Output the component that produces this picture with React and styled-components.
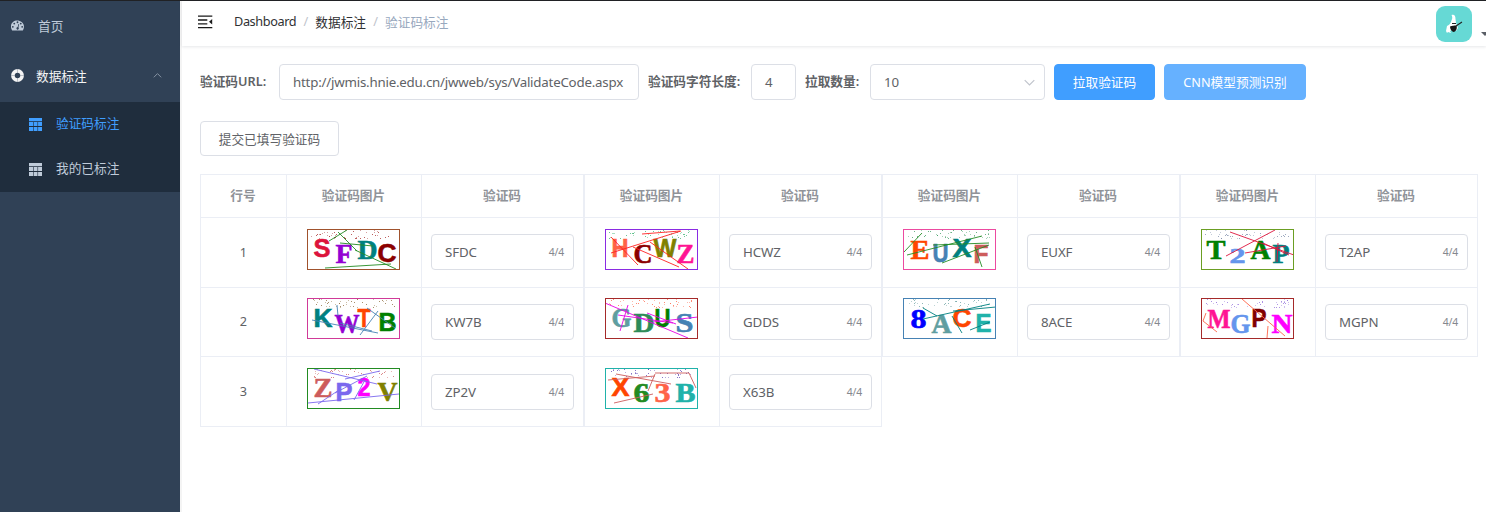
import React from 'react';
import styled, { createGlobalStyle } from 'styled-components';

const GlobalStyle = createGlobalStyle`
  * { box-sizing: border-box; }
  body {
    margin: 0;
    background: #fff;
    color: #606266;
    font-family: "Noto Sans", "Noto Sans CJK SC", sans-serif;
    font-size: 12.7px;
    overflow: hidden;
  }
  button, input { font: inherit; }
`;

const Page = styled.div`
  display: flex;
  height: 512px;
  border-top: 1px solid #202124;
  overflow: hidden;
`;

const Sidebar = styled.nav`
  flex: none;
  width: 180px;
  background: #304156;
`;

const MenuItem = styled.a`
  display: flex;
  align-items: center;
  height: ${(p) => p.$height}px;
  padding: 0 18px 2px 11px;
  gap: ${(p) => p.$gap}px;
  color: ${(p) => p.$color || '#bfcbd9'};
  svg { flex: none; }
`;

const SubMenu = styled.div`
  background: #1f2d3d;
`;

const SubItem = styled.a`
  display: flex;
  align-items: center;
  gap: 14px;
  height: 45px;
  padding: 0 0 4px 29px;
  color: ${(p) => (p.$active ? '#409eff' : '#bfcbd9')};
  svg { margin-top: 3px; }
`;

const Fill = styled.span`
  flex: 1;
`;

const Main = styled.main`
  flex: 1;
  min-width: 0;
  border-left: 2px solid #f4f4f4;
`;

const Header = styled.header`
  display: flex;
  align-items: center;
  height: 45px;
  padding: 0 0 3px 16px;
  box-shadow: 0 1px 3px rgba(0, 21, 41, 0.1);
`;

const Breadcrumb = styled.div`
  display: flex;
  flex: 1;
  align-items: center;
  margin-left: 21px;
  padding-bottom: 2px;
  color: #303133;
`;

const Crumb = styled.span`
  letter-spacing: ${(p) => p.$spacing || 0}px;
`;

const Separator = styled.span`
  width: 19px;
  text-align: center;
  color: #c0c4cc;
`;

const Current = styled.span`
  color: #97a8be;
`;

const Account = styled.div`
  display: flex;
  align-items: flex-end;
  flex: none;
  width: 50px;
  height: 36px;
  gap: 9px;
  margin-top: 4px;
  overflow: hidden;
`;

const Avatar = styled.div`
  flex: none;
  width: 36px;
  height: 36px;
  border-radius: 9px;
  background: #66d9d5;
  overflow: hidden;
`;

const Caret = styled.i`
  flex: none;
  border: 4.5px solid transparent;
  border-top-color: #5a5e66;
  margin-bottom: 2px;
`;

const Content = styled.section`
  padding: 18px 0 0 18px;
`;

const Toolbar = styled.div`
  display: flex;
  align-items: center;
  height: 36px;
`;

const Label = styled.label`
  flex: none;
  width: ${(p) => p.$width}px;
  padding-bottom: 3px;
  font-weight: 600;
  white-space: nowrap;
`;

const Field = styled.div`
  display: flex;
  align-items: center;
  justify-content: space-between;
  flex: none;
  width: ${(p) => p.$width}px;
  height: 36px;
  padding: 0 9px 0 13px;
  margin-right: ${(p) => p.$after || 0}px;
  border: 1px solid #dcdfe6;
  border-radius: 4px;
  white-space: nowrap;
  font-size: 13.3px;
  letter-spacing: ${(p) => p.$spacing || 0}px;
`;

const Counter = styled.span`
  font-size: 10.4px;
  letter-spacing: -0.2px;
  color: #85888e;
`;

const Button = styled.button`
  flex: none;
  width: ${(p) => p.$width}px;
  height: ${(p) => p.$height || 36}px;
  padding: 0 0 1px;
  margin-right: 9px;
  border: 1px solid ${(p) => p.$bg || '#dcdfe6'};
  border-radius: 4px;
  background: ${(p) => p.$bg || '#fff'};
  color: ${(p) => (p.$bg ? '#fff' : '#606266')};
  white-space: nowrap;
`;

const Actions = styled.div`
  display: flex;
  padding: 21px 0 18px;
`;

const Tables = styled.div`
  display: flex;
  align-items: flex-start;
`;

const Table = styled.div`
  display: grid;
  grid-template-columns: ${(p) => (p.$numbered ? '86px ' : '')}135px 162px;
  grid-template-rows: 43px 70px 69px;
  grid-auto-rows: 70px;
  border: solid #ebeef5;
  border-width: 1px 0 0 1px;
`;

const HeadCell = styled.div`
  display: flex;
  align-items: center;
  justify-content: center;
  padding: 0 1px 4px 0;
  border: solid #ebeef5;
  border-width: 0 1px 1px 0;
  color: #909399;
  font-weight: 600;
`;

const Cell = styled.div`
  display: flex;
  align-items: center;
  justify-content: center;
  padding-top: ${(p) => p.$top || 0}px;
  padding-right: ${(p) => p.$right || 0}px;
  padding-bottom: ${(p) => p.$bottom || 0}px;
  border: solid #ebeef5;
  border-width: 0 1px 1px 0;
`;

const Picture = styled.svg`
  display: block;
  width: 93px;
  height: 41px;
`;

/* glyph: [char, left, right, baseline, serif, colour, cap height] */
const CODES = {
  SFDC: {
    border: '#a0522d', line: '#228b22', dot: '#a52a2a',
    glyphs: [['S', 7, 23, 28, 0, '#dc143c'], ['F', 29, 45, 34, 1, '#9400d3'], ['D', 51, 70, 30, 1, '#008080'], ['C', 71, 89, 33, 0, '#8b0000']],
    lines: [[22, 12, 40, 1], [31, 3, 50, 22], [33, 14, 66, 17], [48, 21, 89, 40], [18, 39, 84, 35]],
  },
  KW7B: {
    border: '#d03a98', line: '#4682b4', dot: '#8b6b3a',
    glyphs: [['K', 7, 25, 29, 0, '#008080'], ['W', 28, 52, 35, 1, '#9400d3'], ['T', 51, 63, 29, 0, '#ff4500'], ['B', 72, 89, 33, 0, '#008000']],
    lines: [[5, 22, 71, 35], [30, 7, 31, 18], [71, 13, 53, 37], [60, 10, 88, 30], [33, 25, 65, 33]],
  },
  ZP2V: {
    border: '#228b22', line: '#7b68ee', dot: '#cd5c5c',
    glyphs: [['Z', 7, 25, 29, 1, '#cd5c5c'], ['P', 29, 45, 33, 0, '#7b68ee'], ['2', 51, 63, 28, 0, '#ff00ff'], ['V', 71, 90, 33, 1, '#808000']],
    lines: [[7, 1, 70, 16], [38, 11, 73, 3], [60, 8, 28, 25], [58, 12, 47, 32], [1, 35, 92, 26], [11, 36, 32, 22]],
  },
  HCWZ: {
    border: '#8a2be2', line: '#ff2020', dot: '#3cb371',
    glyphs: [['H', 7, 23, 28, 0, '#ff6347'], ['C', 29, 47, 34, 1, '#8b0000'], ['W', 49, 71, 28, 0, '#808000'], ['Z', 72, 89, 34, 1, '#ff1493']],
    lines: [[6, 24, 76, 2], [37, 5, 75, 2], [6, 8, 33, 36], [28, 18, 74, 38], [45, 13, 83, 40]],
  },
  GDDS: {
    border: '#a52a2a', line: '#e600e6', dot: '#ff6347',
    glyphs: [['G', 7, 26, 29, 1, '#5f9ea0'], ['D', 29, 49, 34, 1, '#2e8b57'], ['U', 50, 65, 29, 0, '#008000'], ['S', 71, 88, 34, 1, '#4682b4']],
    lines: [[0, 5, 83, 40], [13, 17, 68, 25], [23, 7, 15, 33], [48, 24, 93, 19], [42, 15, 71, 26]],
  },
  X63B: {
    border: '#20b2aa', line: '#cd5c5c', dot: '#5f45b5',
    glyphs: [['X', 7, 24, 28, 0, '#ff4500'], ['6', 29, 44, 34, 1, '#228b22'], ['3', 50, 65, 34, 1, '#ff6347'], ['B', 71, 90, 34, 1, '#20b2aa']],
    lines: [[11, 6, 66, 16], [3, 12, 50, 8], [50, 5, 84, 5], [84, 5, 91, 20], [50, 6, 43, 23], [9, 35, 48, 26]],
  },
  EUXF: {
    border: '#ec4aa0', line: '#228b22', dot: '#3c9b60',
    glyphs: [['E', 8, 26, 30, 1, '#ff4500'], ['U', 30, 45, 33, 0, '#4682b4'], ['X', 50, 68, 28, 0, '#008080'], ['F', 71, 85, 34, 0, '#cd5c5c']],
    lines: [[4, 26, 79, 7], [30, 16, 86, 14], [39, 34, 86, 16], [19, 4, 1, 23], [72, 18, 79, 38]],
  },
  '8ACE': {
    border: '#4682b4', line: '#008080', dot: '#6aa0a0',
    glyphs: [['8', 8, 23, 30, 1, '#0000ff'], ['A', 29, 48, 35, 1, '#5f9ea0'], ['C', 50, 68, 29, 0, '#ff4500'], ['E', 73, 88, 34, 0, '#20b2aa']],
    lines: [[20, 21, 87, 6], [20, 10, 34, 18], [50, 13, 93, 9], [49, 18, 59, 35], [67, 32, 87, 24]],
  },
  T2AP: {
    border: '#6b9e23', line: '#dc143c', dot: '#7b8ba8',
    glyphs: [['T', 6, 24, 30, 1, '#008000'], ['2', 29, 44, 34, 1, '#6495ed', 14], ['A', 50, 69, 30, 1, '#008000'], ['P', 72, 88, 34, 1, '#008080']],
    lines: [[29, 3, 93, 26], [74, 1, 25, 27], [44, 24, 85, 17], [62, 14, 88, 26], [77, 14, 76, 33]],
  },
  MGPN: {
    border: '#a52a2a', line: '#ff6347', dot: '#9370db',
    glyphs: [['M', 7, 29, 30, 1, '#ff1493'], ['G', 30, 49, 35, 1, '#6495ed'], ['P', 51, 65, 29, 0, '#800000'], ['N', 71, 91, 35, 1, '#ff00ff']],
    lines: [[41, 1, 84, 38], [5, 15, 2, 23], [2, 23, 16, 34], [67, 28, 66, 40]],
  },
};

function Captcha({ code }) {
  const { border, line, dot, glyphs, lines } = CODES[code];
  const seed = code.charCodeAt(0) * 7 + code.charCodeAt(1);
  const dots = Array.from({ length: 46 }, (_, i) => {
    const a = Math.abs(Math.sin((i + 1) * 12.9898 + seed) * 43758.5453) % 1;
    const b = Math.abs(Math.sin((i + 1) * 78.233 + seed) * 12543.123) % 1;
    return [Math.floor(4 + a * 84), Math.floor(1 + b * 9)];
  });
  return (
    <Picture viewBox="0 0 93 41">
      {dots.map(([x, y], i) => (
        <rect key={i} x={x} y={y} width="1" height="1" fill={dot} opacity={i % 2 ? 0.75 : 0.45} />
      ))}
      {glyphs.map(([ch, x1, x2, y, serif, fill, cap = 18]) => (
        <text
          key={ch + x1}
          x={x1 - 0.5}
          y={y}
          fill={fill}
          stroke={fill}
          strokeWidth="0.6"
          fontSize={serif ? cap / 0.655 : cap / 0.688}
          fontWeight="700"
          fontFamily={serif ? '"Liberation Serif", serif' : '"Liberation Sans", sans-serif'}
          textLength={x2 - x1 + 1}
          lengthAdjust="spacingAndGlyphs"
        >
          {ch}
        </text>
      ))}
      {lines.map(([a, b, c, d], i) => (
        <line key={i} x1={a} y1={b} x2={c} y2={d} stroke={line} strokeWidth="0.9" />
      ))}
      <rect x="0.5" y="0.5" width="92" height="40" fill="none" stroke={border} />
    </Picture>
  );
}

const GridIcon = () => (
  <svg width="13" height="13" viewBox="0 0 13 13" fill="currentColor">
    <path d="M0 0h13v3.2H0zM0 4h4.2v4H0zM4.8 4h3.7v4H4.8zM9.1 4H13v4H9.1zM0 9h4.2v4H0zM4.8 9h3.7v4H4.8zM9.1 9H13v4H9.1z" />
  </svg>
);

const DashboardIcon = () => (
  <svg width="13" height="11" viewBox="0 0 128 100">
    <path
      fill="currentColor"
      fillRule="evenodd"
      d="M27 63a9 9 0 1 0-18 0 9 9 0 0 0 18 0zm14-32a9 9 0 1 0-18 0 9 9 0 0 0 18 0zm32 35 7-27c1-4-5-6-7-2l-7 27c-13 1-18 17-7 25 12 7 25-9 14-23zm46-3a9 9 0 1 0-18 0 9 9 0 0 0 18 0zM73 18a9 9 0 1 0-18 0 9 9 0 0 0 18 0zm32 13a9 9 0 1 0-18 0 9 9 0 0 0 18 0zm23 32c0 13-4 24-10 34-1 2-2 3-4 3H14c-2 0-3-1-4-3C-29 27 49-27 108 19c13 11 20 27 20 44z"
    />
  </svg>
);

const ComponentIcon = () => (
  <svg width="13" height="13" viewBox="0 0 13 13" fill="none">
    <circle cx="6.5" cy="6.5" r="4.6" stroke="currentColor" strokeWidth="3.7" />
    <path d="M6.5 0v3.8M6.5 9.2V13M0 6.5h3.8M9.2 6.5H13" stroke="#304156" strokeWidth="0.7" opacity="0.4" />
  </svg>
);

const FoldIcon = () => (
  <svg width="15" height="14" viewBox="0 0 15 14">
    <path d="M0 1.1h14.3M0 5h9.3M0 8.8h9.3M0 12.7h14.3" stroke="#1a1a1a" strokeWidth="1.3" />
    <path d="M14.2 4v5.6L11 6.8z" fill="#1a1a1a" />
  </svg>
);

const Chevron = ({ up, size = 11, color }) => (
  <svg width={size} height="7" viewBox="0 0 11 7" fill="none" stroke={color} strokeWidth="1.2">
    <path d={up ? 'M1 5.7 5.5 1.2 10 5.7' : 'M.7 1.2 5.5 6 10.3 1.2'} />
  </svg>
);

const AvatarArt = () => (
  <svg width="36" height="36" viewBox="0 0 36 36">
    <path d="M15.5 9c3-1 4 1 4 4l.5 4 2 5-2 3-4-1-2 1 1 2-3-1-1 1-1-2 1-5c2-1 3-2 4-4 1-3 2-4 .5-7z" fill="#fff" />
    <path d="M14 20.500c2-1 4-1 6.500-1 1 3-.5 6-3 6.500-2-.5-3.500-3-3.500-5.500z" fill="#171717" />
    <path d="M16 17.500h4M20 20l6-4" stroke="#222" strokeWidth="1.100" />
  </svg>
);

const GROUPS = [
  ['SFDC', 'KW7B', 'ZP2V'],
  ['HCWZ', 'GDDS', 'X63B'],
  ['EUXF', '8ACE'],
  ['T2AP', 'MGPN'],
];

function CodeTable({ codes, numbered }) {
  return (
    <Table $numbered={numbered}>
      {numbered && <HeadCell>行号</HeadCell>}
      <HeadCell>验证码图片</HeadCell>
      <HeadCell>验证码</HeadCell>
      {codes.map((code, i) => (
        <React.Fragment key={code}>
          {numbered && <Cell $bottom={2}>{i + 1}</Cell>}
          <Cell $bottom={i === 1 ? 7 : 6} $right={1}><Captcha code={code} /></Cell>
          <Cell $bottom={1} $top={i === 2 ? 1 : 0}>
            <Field $width={143} $spacing={-0.1}>
              {code}
              <Counter>4/4</Counter>
            </Field>
          </Cell>
        </React.Fragment>
      ))}
    </Table>
  );
}

export default function App() {
  return (
    <>
      <GlobalStyle />
      <Page>
        <Sidebar>
          <MenuItem $height={50} $gap={14}>
            <DashboardIcon />首页
          </MenuItem>
          <MenuItem $height={51} $gap={12} $color="#f4f4f5">
            <ComponentIcon />数据标注
            <Fill />
            <Chevron up size={9} color="#8793a3" />
          </MenuItem>
          <SubMenu>
            <SubItem $active><GridIcon />验证码标注</SubItem>
            <SubItem><GridIcon />我的已标注</SubItem>
          </SubMenu>
        </Sidebar>
        <Main>
          <Header>
            <FoldIcon />
            <Breadcrumb>
              <Crumb $spacing={-0.38}>Dashboard</Crumb><Separator>/</Separator>
              <Crumb>数据标注</Crumb><Separator>/</Separator>
              <Current>验证码标注</Current>
            </Breadcrumb>
            <Account>
              <Avatar><AvatarArt /></Avatar>
              <Caret />
            </Account>
          </Header>
          <Content>
            <Toolbar>
              <Label $width={79}>验证码URL:</Label>
              <Field $width={360} $after={9} $spacing={-0.21}>http://jwmis.hnie.edu.cn/jwweb/sys/ValidateCode.aspx</Field>
              <Label $width={103}>验证码字符长度:</Label>
              <Field $width={45} $after={9}>4</Field>
              <Label $width={65}>拉取数量:</Label>
              <Field $width={175} $after={9}>
                10<Chevron color="#c0c4cc" />
              </Field>
              <Button $width={101} $bg="#409eff">拉取验证码</Button>
              <Button $width={142} $bg="#66b1ff">CNN模型预测识别</Button>
            </Toolbar>
            <Actions>
              <Button $width={139} $height={35}>提交已填写验证码</Button>
            </Actions>
            <Tables>
              {GROUPS.map((codes, i) => (
                <CodeTable key={i} codes={codes} numbered={i === 0} />
              ))}
            </Tables>
          </Content>
        </Main>
      </Page>
    </>
  );
}
